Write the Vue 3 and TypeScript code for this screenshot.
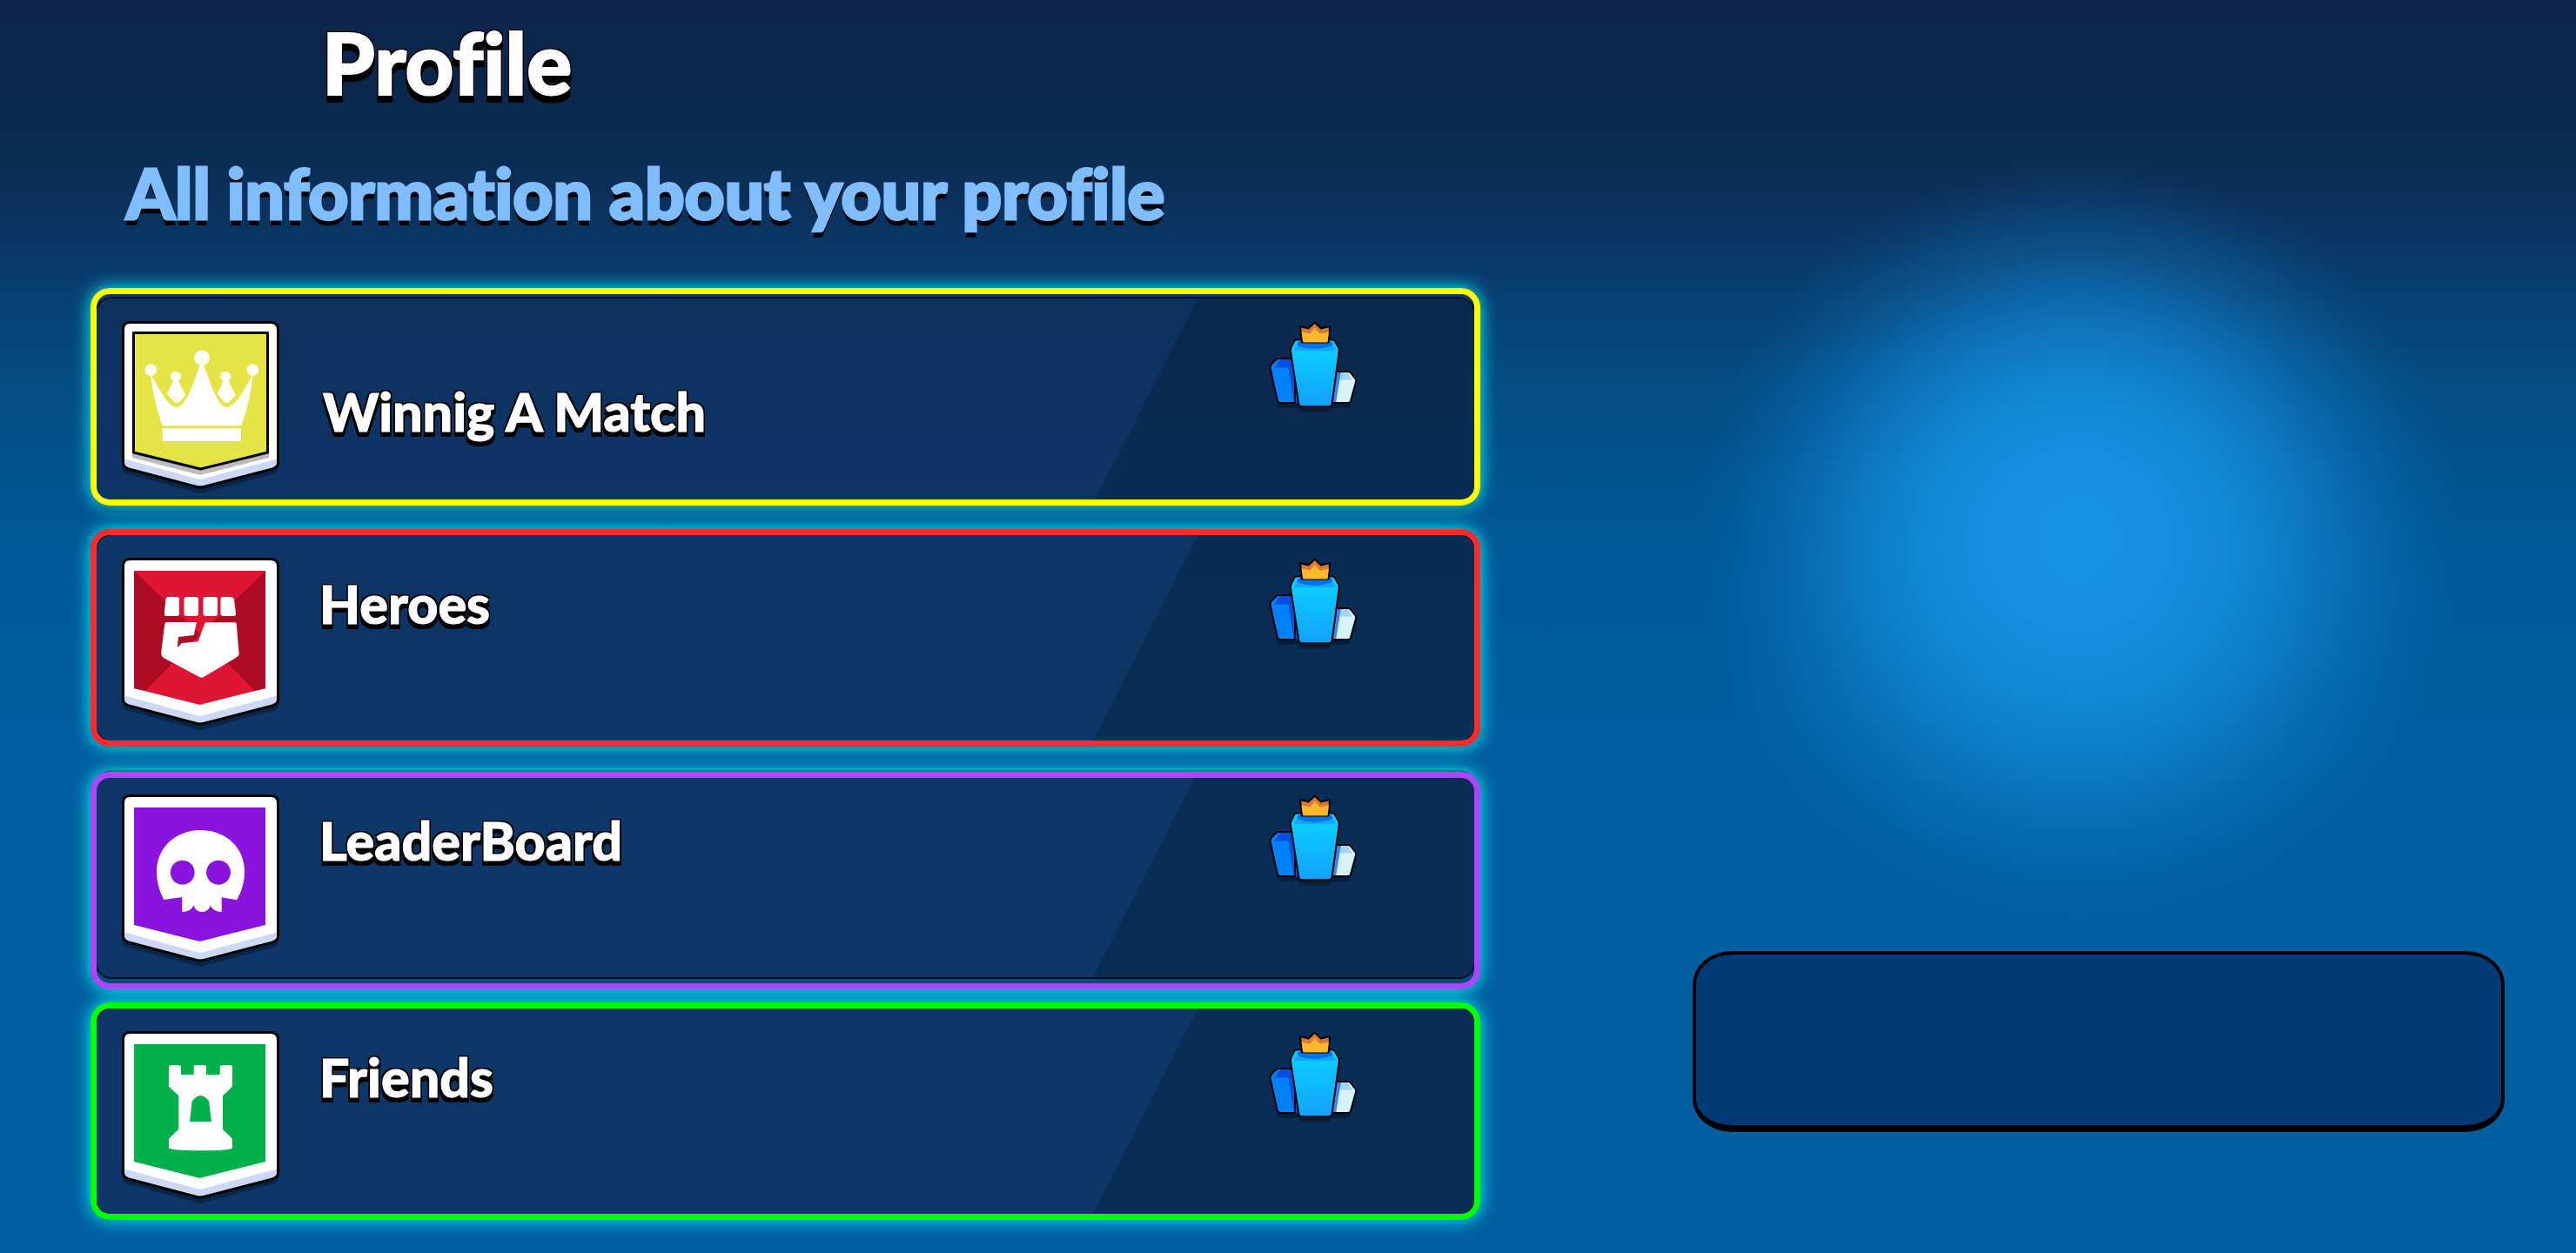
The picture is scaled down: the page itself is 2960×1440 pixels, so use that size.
<script setup lang="ts">
type Emblem = 'crown' | 'fist' | 'skull' | 'tower'

interface Category {
  title: string
  emblem: Emblem
  frame: string
}

const categories: Category[] = [
  { title: 'Winnig A Match', emblem: 'crown', frame: 'yellow' },
  { title: 'Heroes', emblem: 'fist', frame: 'red' },
  { title: 'LeaderBoard', emblem: 'skull', frame: 'purple' },
  { title: 'Friends', emblem: 'tower', frame: 'green' },
]

const fills: Record<Emblem, string> = {
  crown: '#e5e346',
  fist: '#de1534',
  skull: '#8a13dd',
  tower: '#03b04b',
}
</script>

<template>
  <main class="page">
    <section class="profile">
      <h1 class="title">Profile</h1>
      <p class="subtitle">All information about your profile</p>

      <ul class="list">
        <li v-for="c in categories" :key="c.title" class="row" :class="`row--${c.frame}`">
          <div class="panel">
            <svg class="badge" viewBox="0 0 181 200" aria-hidden="true">
              <path d="M1 20V170Q1 174 8 176L86 197Q90 198 94 197L173 176Q180 174 180 170V20Z" fill="#000" opacity=".3" />
              <path d="M9 1.5H171Q179.500 1.500 179.500 10V163Q179.500 168 173 170L94 190.500Q90 191.500 86 190.500L8 170Q1.500 168 1.500 163V10Q1.500 1.500 9 1.500Z" fill="#cdd9f2" />
              <path d="M9 1.500H171Q179.500 1.500 179.500 10V158L94 181Q90 182 86 181L1.500 158V10Q1.500 1.500 9 1.500Z" fill="#fff" />
              <path d="M9 1.500H171Q179.500 1.500 179.500 10V163Q179.500 168 173 170L94 190.500Q90 191.500 86 190.500L8 170Q1.500 168 1.500 163V10Q1.500 1.500 9 1.500Z" fill="none" stroke="#000" stroke-width="3" />
              <template v-if="c.emblem === 'crown'">
                <path d="M12 150V157L90 177L169 157V150Z" fill="#bdbbbd" />
                <path d="M13.500 13.500H167.500V151L90.500 170L13.500 151Z" :fill="fills.crown" stroke="#000" stroke-width="3" stroke-linejoin="round" />
                <g fill="#fff">
                  <circle cx="33.300" cy="56" r="6.800" />
                  <circle cx="62" cy="63.700" r="5.900" />
                  <circle cx="92" cy="42" r="8.800" />
                  <circle cx="119.300" cy="63.700" r="5.900" />
                  <circle cx="150.300" cy="56" r="6.800" />
                  <path d="M33 61C42 76 53 99 63.300 99C74 99 84 66 90 50H94C100 66 110 99 120.300 99C131 99 142 76 150.700 61C149 80 143 106 137 120.300H46.700C41 105 35 80 33 61Z" />
                  <path d="M60 67H64L73.300 85L67 92.500Q63.300 96 59.500 92.500L51.700 84Z" />
                  <path d="M117.500 67H121.500L131 85.500L124 92.500Q120.500 96 117 92.500L109.500 84Z" />
                  <path d="M46.700 123.300H137V138H46.700Z" />
                </g>
                <path d="M50.500 84L59 93.500Q63.300 97.500 67.500 93.500L74 85.500M108.500 84L116.500 93.500Q120.500 97.500 124.500 93.500L132 85.500" fill="none" :stroke="fills.crown" stroke-width="2" />
              </template>
              <path v-else d="M14 15H165V150L89.500 169L14 150Z" :fill="fills[c.emblem]" />
              <template v-if="c.emblem === 'fist'">
                <path d="M14 15L90 88L27 153L14 150ZM165 15L90 88L152.500 153L165 150Z" fill="#ad0c25" />
                <path d="M53.500 45H63Q66 45 66 48V64Q66 67 63 67H51Q48.500 67 48.700 64L50.500 48Q51 45 53.500 45ZM74.500 45H85Q88 45 88 48V64Q88 67 85 67H74.500Q71.500 67 71.500 64V48Q71.500 45 74.500 45ZM96.500 45H107Q110 45 110 48V64Q110 67 107 67H96.500Q93.500 67 93.500 64V48Q93.500 45 96.500 45ZM116.500 45H124.500Q128 45 129 48L131 64Q131.300 67 128 67H116.500Q113.500 67 113.500 64V48Q113.500 45 116.500 45Z" fill="#fff" />
                <path d="M51.500 74H86L82.700 89L65 91L63.700 103L69.300 98L87.700 96.300L95 76Q95.600 74.300 97.500 74.300H129.500Q131.600 74.300 131.800 76.500L134.700 111Q134.500 113 131 115L94 137Q91.500 138.600 89 137L48 115Q45.200 113 45.200 109L49.200 76.500Q49.500 74 51.500 74Z" fill="#fff" />
              </template>
              <path v-else-if="c.emblem === 'skull'" d="M90.700 41C118 41 141 60 141 88.700Q141 106 132.300 121.300L114.700 118.300V135Q105.500 135 101.700 127.700Q99.500 135 92.300 135Q85 135 82.700 127.700Q78.500 135 69.300 135V118L48.300 121Q40 106 40 88.700C40 60 63 41 90.700 41ZM69.700 75.700a14 14 0 1 0 .01 0ZM111 75.700a14 14 0 1 0 .01 0Z" fill="#fff" fill-rule="evenodd" />
              <path v-else-if="c.emblem === 'tower'" d="M56 39.300H66Q68 39.300 68 41.300V50H82.700V41.300Q82.700 39.300 84.700 39.300H95Q97 39.300 97 41.300V50H112.700V41.300Q112.700 39.300 114.700 39.300H125Q127 39.300 127 41.300V63.700L116 74.300V112.700L127 123.700V134.300Q126 137.300 90.300 137.300Q55 137.300 54 134.300V123.700L65.300 112.700V74.300L54 63.700V41.300Q54 39.300 56 39.300ZM78 104H103L100 80.300Q96 75 90.300 73.700Q85 75 80.700 80.300Z" fill="#fff" fill-rule="evenodd" />
            </svg>

            <h2 class="name">{{ c.title }}</h2>

            <svg class="prize" viewBox="0 0 102 105" aria-hidden="true">
              <defs>
                <linearGradient id="crystal" x1="0" y1="0" x2="0" y2="1">
                  <stop offset="0" stop-color="#0bd3ff" />
                  <stop offset="1" stop-color="#11a2fb" />
                </linearGradient>
              </defs>
              <path d="M2 57L10 97Q11 100 14 100H34L36 104.500H70L73 100H89Q93 100 94 97L101 74Z" fill="#000" opacity=".3" />
              <path d="M9.500 43H30V94H13Q10.500 94 9.700 91L1.700 55Q1 52 3 49.500Z" fill="#0080f5" />
              <path d="M6.500 53.500L13 43.500H27L36 94H29L22.500 53.500Z" fill="#0050e4" />
              <path d="M9.500 43H30V94H13Q10.500 94 9.700 91L1.700 55Q1 52 3 49.500Z" fill="none" stroke="#000" stroke-width="2" />
              <path d="M72 58H91Q93 58 94 59.500L99.500 66.500Q100.700 68 100 70L94 91.500Q93 94 90.500 94H70Z" fill="#d6f2fb" />
              <path d="M82 58.500H90L96 67.500H82Z" fill="#a4d3f5" />
              <path d="M76 58H83L77 94H70Z" fill="#3f82ee" />
              <path d="M72 58H91Q93 58 94 59.500L99.500 66.500Q100.700 68 100 70L94 91.500Q93 94 90.500 94H70Z" fill="none" stroke="#000" stroke-width="2" />
              <path d="M31.500 21.500H73Q75 21.500 76 23.500L80.300 31Q81 32.500 80.700 35L72.500 95.500Q72 98.300 69.500 98.300H37Q34.800 98.300 34.400 95.500L25 35Q24.600 32.500 25.300 31L29 23.500Q30 21.500 31.500 21.500Z" fill="url(#crystal)" stroke="#000" stroke-width="2" />
              <path d="M33 22.500H72L76 34H30Z" fill="#12a5fb" />
              <ellipse cx="52.700" cy="26" rx="20" ry="5.700" fill="#0072ef" />
              <path d="M36 6L45.500 8.500L52.700 1.500L60 8.500L70 6L68.500 24.500H38Z" fill="#db7833" stroke="#000" stroke-width="2" stroke-linejoin="round" />
              <path d="M37.500 12.500L47.500 14.500L52.700 7.500L58.500 14.500L69 12.500L67.500 24.500H39.500Z" fill="#fdb92e" />
            </svg>
          </div>
          <span class="frame" aria-hidden="true"></span>
        </li>
      </ul>
    </section>

    <aside class="preview">
      <div class="glow"></div>
      <div class="card"></div>
    </aside>
  </main>
</template>

<style>
body {
  margin: 0;
}
</style>

<style scoped>
.page {
  display: grid;
  grid-template-columns: 1597fr 933fr;
  column-gap: 244px;
  box-sizing: border-box;
  min-height: 100vh;
  padding: 0 82px 0 104px;
  overflow: hidden;
  font-family: Lato, "Liberation Sans", sans-serif;
  background: linear-gradient(
    #0d254b 0,
    #0c274c 100px,
    #0b2f57 210px,
    #093a6a 300px,
    #034b83 430px,
    #02538f 540px,
    #005a99 680px,
    #005f9f 860px,
    #005f9f 100%
  );
}

.profile {
  display: flex;
  flex-direction: column;
}

.title,
.subtitle,
.name {
  margin: 0;
  font-weight: 900;
  font-variant-ligatures: none;
  white-space: nowrap;
}

.title {
  padding: 16px 0 0 266px;
  font-size: 97px;
  line-height: 112px;
  color: #fff;
  -webkit-text-stroke: 2px #fff;
  text-shadow:
    -2px -2px 0 #000,
    2px -2px 0 #000,
    -2px 2px 0 #000,
    2px 2px 0 #000,
    -2px 6px 0 #000,
    2px 6px 0 #000,
    -2px 9px 0 #000,
    2px 9px 0 #000;
}

.subtitle {
  padding: 42px 0 0 41px;
  font-size: 80px;
  line-height: 102px;
  color: #80bdff;
  -webkit-text-stroke: 3px #80bdff;
  text-shadow:
    0 3px 0 #000,
    0 7px 0 #000;
}

.list {
  display: flex;
  flex-direction: column;
  gap: 32px;
  margin: 69px 5px 0;
  padding: 0;
  list-style: none;
}

.row {
  position: relative;
}

.panel {
  position: relative;
  display: flex;
  align-items: flex-start;
  box-sizing: border-box;
  height: 240px;
  padding: 26px 134px 0 29px;
  border: 2px solid #04101f;
  border-radius: 20px;
  background: rgba(16, 45, 90, 0.8);
  background-clip: padding-box;
  box-shadow: 0 8px 0 rgba(0, 0, 0, 0.2);
}

.panel::before {
  content: "";
  position: absolute;
  inset: 0 0 0 auto;
  width: 438px;
  border-radius: 0 18px 18px 0;
  background: rgba(0, 0, 0, 0.17);
  clip-path: polygon(120px 0, 100% 0, 100% 100%, 0 100%);
}

.badge {
  flex: none;
  width: 181px;
  height: 200px;
}

.name {
  flex: 1;
  padding: 20px 0 0 46px;
  font-size: 61px;
  line-height: 66px;
  color: #fff;
  -webkit-text-stroke: 1px #fff;
  text-shadow:
    -2px -2px 0 #000,
    2px -2px 0 #000,
    -2px 2px 0 #000,
    2px 2px 0 #000,
    -2px 6px 0 #000,
    2px 6px 0 #000;
}

.row--yellow .name {
  padding: 71px 0 0 50px;
}

.prize {
  position: relative;
  flex: none;
  width: 102px;
  height: 105px;
}

/* Neon frame laid over each panel; its glow spills onto the page. */
.frame {
  position: absolute;
  top: -5px;
  left: -5px;
  right: -5px;
  box-sizing: border-box;
  height: 250px;
  border: 7px solid var(--frame);
  border-radius: 22px;
  box-shadow: 0 0 20px #0ff;
}

.row--yellow {
  --frame: #ff0;
}

.row--red {
  --frame: #fb2c2c;
}

.row--purple {
  --frame: #ac46fb;
}

.row--green {
  --frame: #0f0;
}

.row--yellow .frame {
  top: -10px;
}

.row--purple .frame {
  top: 2px;
}

.preview {
  display: flex;
  flex-direction: column;
  align-items: center;
}

.glow {
  width: 880px;
  height: 880px;
  margin: 180px 48px 0 0;
  border-radius: 50%;
  background: radial-gradient(
    closest-side,
    #1591e3 0,
    rgba(21, 145, 227, 0.97) 22%,
    rgba(21, 145, 227, 0.84) 40%,
    rgba(21, 145, 227, 0.58) 58%,
    rgba(21, 145, 227, 0.28) 75%,
    rgba(21, 145, 227, 0.08) 90%,
    rgba(21, 145, 227, 0) 100%
  );
}

.card {
  align-self: stretch;
  box-sizing: border-box;
  height: 208px;
  margin-top: 33px;
  border: 4px solid #000;
  border-bottom-width: 8px;
  border-radius: 45px / 38px;
  background: #003b78;
}
</style>
